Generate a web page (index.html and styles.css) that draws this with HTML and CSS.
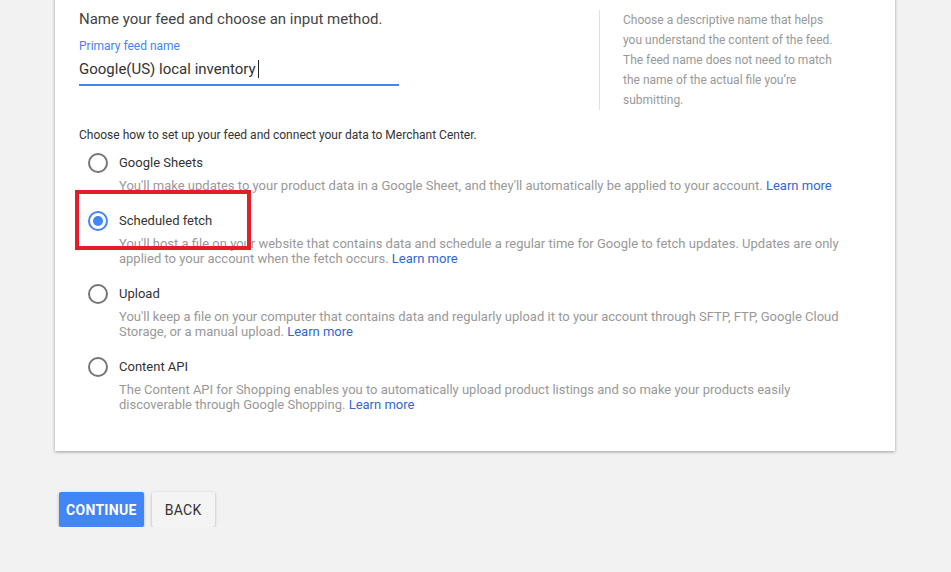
FILE: index.html
```html
<!DOCTYPE html>
<html lang="en">
<head>
    <meta charset="UTF-8">
    <title>Merchant Center - Create feed</title>
    <link rel="stylesheet" href="styles.css">
</head>
<body>
    <div class="card">
        <div class="name-row">
            <div class="name-main">
                <h2>Name your feed and choose an input method.</h2>
                <label class="field-label" for="feedName">Primary feed name</label>
                <div class="field">
                    <span class="field-value" id="feedName">Google(US) local inventory</span><span class="caret"></span>
                </div>
            </div>
            <div class="name-help">
                Choose a descriptive name that helps you understand the content of the feed. The feed name does not need to match the name of the actual file you’re submitting.
            </div>
        </div>

        <p class="choose">Choose how to set up your feed and connect your data to Merchant Center.</p>

        <div class="options">
            <div class="option">
                <span class="radio"></span>
                <div class="option-body">
                    <div class="option-title">Google Sheets</div>
                    <div class="option-desc">You'll make updates to your product data in a Google Sheet, and they'll automatically be applied to your account. <a href="#">Learn more</a></div>
                </div>
            </div>
            <div class="option">
                <span class="radio checked"></span>
                <div class="option-body">
                    <div class="option-title">Scheduled fetch</div>
                    <div class="option-desc">You'll host a file on your website that contains data and schedule a regular time for Google to fetch updates. Updates are only applied to your account when the fetch occurs. <a href="#">Learn more</a></div>
                </div>
                <div class="highlight"></div>
            </div>
            <div class="option">
                <span class="radio"></span>
                <div class="option-body">
                    <div class="option-title">Upload</div>
                    <div class="option-desc">You'll keep a file on your computer that contains data and regularly upload it to your account through SFTP, FTP, Google Cloud Storage, or a manual upload. <a href="#">Learn more</a></div>
                </div>
            </div>
            <div class="option">
                <span class="radio"></span>
                <div class="option-body">
                    <div class="option-title">Content API</div>
                    <div class="option-desc">The Content API for Shopping enables you to automatically upload product listings and so make your products easily discoverable through Google Shopping. <a href="#">Learn more</a></div>
                </div>
            </div>
        </div>
    </div>

    <div class="actions">
        <button type="button" class="btn btn-primary">CONTINUE</button>
        <button type="button" class="btn">BACK</button>
    </div>
</body>
</html>
```

FILE: styles.css
```css
body {
    margin: 0;
    background: #f2f2f2;
    font-family: Roboto, "Liberation Sans", Arial, sans-serif;
    color: #333;
    overflow: hidden;
}
.card {
    width: 792px;
    margin: -20px 0 0 55px;
    padding: 29px 24px 39px 24px;
    background: #fff;
    box-shadow: 0 1px 3px rgba(0, 0, 0, 0.35);
}
.name-row {
    display: flex;
}
.name-main {
    width: 520px;
}
h2 {
    margin: 0;
    font-size: 15px;
    font-weight: normal;
    line-height: 20px;
    color: #444;
}
.field-label {
    display: block;
    margin-top: 9px;
    font-size: 12px;
    line-height: 16px;
    color: #4285f4;
}
.field {
    width: 320px;
    height: 30px;
    border-bottom: 2px solid #4285f4;
    display: flex;
    align-items: center;
    font-size: 15px;
    color: #333;
}
.caret {
    display: inline-block;
    width: 1px;
    height: 18px;
    margin-left: 2px;
    background: #222;
}
.name-help {
    margin-top: 1px;
    padding: 0 20px 0 23px;
    border-left: 1px solid #e0e0e0;
    width: 218px;
    font-size: 12px;
    line-height: 20px;
    color: #999;
}
.choose {
    margin: 17px 0 0 0;
    font-size: 12px;
    line-height: 16px;
    color: #333;
}
.options {
    margin-top: 10px;
    padding-left: 9px;
}
.option {
    position: relative;
    display: flex;
    align-items: flex-start;
    margin-bottom: 18px;
}
.option:last-child {
    margin-bottom: 0;
}
.radio {
    flex: none;
    box-sizing: border-box;
    width: 20px;
    height: 20px;
    border: 2px solid #757575;
    border-radius: 50%;
    display: flex;
    align-items: center;
    justify-content: center;
}
.radio.checked {
    border-color: #4285f4;
}
.radio.checked::after {
    content: "";
    width: 10px;
    height: 10px;
    border-radius: 50%;
    background: #4285f4;
}
.option-body {
    margin-left: 11px;
    max-width: 728px;
}
.option-title {
    font-size: 13px;
    line-height: 20px;
    color: #333;
}
.option-desc {
    margin-top: 5px;
    font-size: 13px;
    line-height: 15px;
    color: #999;
}
.option-desc a {
    color: #3367d6;
    text-decoration: none;
}
.highlight {
    position: absolute;
    left: -13px;
    top: -21px;
    width: 168px;
    height: 52px;
    border: 4px solid #e41e26;
}
.actions {
    display: flex;
    gap: 8px;
    margin: 41px 0 0 59px;
}
.btn {
    height: 35px;
    padding: 0 13px;
    border: none;
    border-radius: 2px;
    background: #f4f4f4;
    color: #333;
    font-family: Roboto, "Liberation Sans", Arial, sans-serif;
    font-size: 14px;
    font-weight: normal;
    letter-spacing: 0.3px;
    box-shadow: 0 1px 3px rgba(0, 0, 0, 0.3);
}
.btn-primary {
    padding: 0 7px;
    background: #4285f4;
    color: #fff;
    font-weight: bold;
}
```
